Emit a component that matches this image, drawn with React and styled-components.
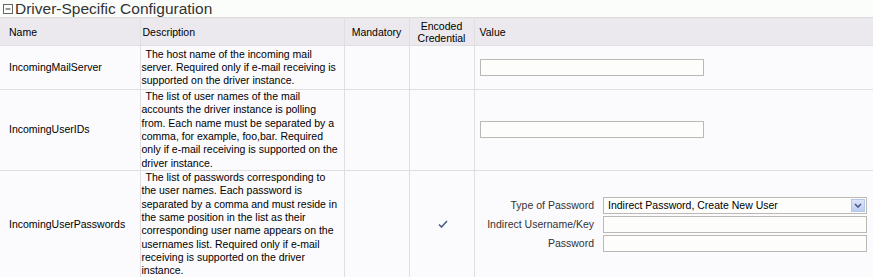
import React from "react";
import styled, { createGlobalStyle } from "styled-components";

const GlobalStyle = createGlobalStyle`
  body {
    margin: 0;
    background-color: #fbfdfb;
    font-family: "Liberation Sans", Arial, sans-serif;
  }
`;

const Section = styled.div`
  width: 873px;
`;

const SectionTitle = styled.h2`
  display: flex;
  align-items: center;
  gap: 2px;
  margin: 0;
  height: 17px;
  padding-left: 3px;
  font-size: 15.5px;
  line-height: 17px;
  font-weight: normal;
  color: #333;
`;

const ToggleIcon = styled.svg`
  width: 10px;
  height: 10px;
  flex-shrink: 0;
`;

const Grid = styled.table`
  width: 873px;
  border-collapse: collapse;
  table-layout: fixed;
  font-size: 10.5px;
  line-height: 13.33px;
  color: #000;
`;

const HeadCell = styled.th`
  height: 27px;
  padding: 0 ${(p) => (p.$pad ? p.$pad : "2px")};
  background-color: #ebe9ed;
  border: 1px solid #dfdee1;
  border-top-color: #dcdcdc;
  font-weight: normal;
  line-height: 12px;
  text-align: ${(p) => p.$align || "left"};
  vertical-align: middle;
  &:first-child { border-left: none; }
  &:last-child { border-right: none; }
`;

const Row = styled.tr`
  height: ${(p) => p.$height || "auto"};
  background-color: #fbfafd;
`;

const Cell = styled.td`
  padding: 0 ${(p) => p.$pad || "2px"};
  border: 1px solid #dfdee1;
  text-align: ${(p) => p.$align || "left"};
  vertical-align: middle;
  &:first-child { border-left: none; }
  &:last-child { border-right: none; }
`;

const DescCell = styled(Cell)`
  padding: 0 1px;
  text-indent: 4px;
`;

const TextInput = styled.div`
  box-sizing: border-box;
  width: ${(p) => p.$width || "264px"};
  height: 17px;
  border: 1px solid #bcb9b4;
  background-color: #fdfefc;
`;

const PasswordForm = styled.div`
  display: grid;
  grid-template-columns: auto 264px;
  column-gap: 9px;
  row-gap: 2px;
  justify-content: end;
  align-items: center;
`;

const FieldLabel = styled.span`
  color: #333;
  text-align: right;
  white-space: nowrap;
`;

const SelectBox = styled.div`
  box-sizing: border-box;
  display: flex;
  align-items: center;
  justify-content: space-between;
  height: 17px;
  padding: 0 1px 0 4px;
  border: 1px solid #bcb9b4;
  background-color: #fdfefc;
  color: #000;
`;

const ArrowButton = styled.span`
  box-sizing: border-box;
  display: flex;
  align-items: center;
  justify-content: center;
  width: 14px;
  height: 13px;
  border: 1px solid #b4c6ea;
  background: linear-gradient(#dbe5f9, #bccdf1);
`;

const Check = styled.svg`
  width: 10px;
  height: 8px;
  margin-left: 3px;
`;

const rows = [
  {
    name: "IncomingMailServer",
    height: "44px",
    desc: "The host name of the incoming mail server. Required only if e-mail receiving is supported on the driver instance.",
  },
  {
    name: "IncomingUserIDs",
    desc: "The list of user names of the mail accounts the driver instance is polling from. Each name must be separated by a comma, for example, foo,bar. Required only if e-mail receiving is supported on the driver instance.",
  },
];

export default function App() {
  return (
    <Section>
      <GlobalStyle />
      <SectionTitle>
        <ToggleIcon viewBox="0 0 10 10">
          <rect x="0.5" y="0.5" width="9" height="9" fill="#fff" stroke="#666" />
          <line x1="2.5" y1="5" x2="7.5" y2="5" stroke="#333" />
        </ToggleIcon>
        Driver-Specific Configuration
      </SectionTitle>
      <Grid>
        <colgroup>
          <col style={{ width: 140 }} />
          <col style={{ width: 204 }} />
          <col style={{ width: 65 }} />
          <col style={{ width: 65 }} />
          <col style={{ width: 399 }} />
        </colgroup>
        <thead>
          <tr>
            <HeadCell $pad="9px">Name</HeadCell>
            <HeadCell>Description</HeadCell>
            <HeadCell $align="center" $pad="3px">Mandatory</HeadCell>
            <HeadCell $align="center" $pad="3px">
              Encoded
              <br />
              Credential
            </HeadCell>
            <HeadCell $pad="5px">Value</HeadCell>
          </tr>
        </thead>
        <tbody>
          {rows.map((r) => (
            <Row key={r.name} $height={r.height}>
              <Cell $pad="9px">{r.name}</Cell>
              <DescCell>{r.desc}</DescCell>
              <Cell />
              <Cell />
              <Cell $pad="5px">
                <TextInput $width="224px" />
              </Cell>
            </Row>
          ))}
          <Row>
            <Cell $pad="9px">IncomingUserPasswords</Cell>
            <DescCell>
              The list of passwords corresponding to the user names. Each password is separated by a
              comma and must reside in the same position in the list as their corresponding user
              name appears on the usernames list. Required only if e-mail receiving is supported on
              the driver instance.
            </DescCell>
            <Cell />
            <Cell $align="center">
              <Check viewBox="0 0 10 8">
                <path d="M1 4.5 L3.5 7 L9 1" fill="none" stroke="#4c5d82" strokeWidth="1.6" />
              </Check>
            </Cell>
            <Cell $pad="6px">
              <PasswordForm>
                <FieldLabel>Type of Password</FieldLabel>
                <SelectBox>
                  Indirect Password, Create New User
                  <ArrowButton>
                    <svg width="8" height="5" viewBox="0 0 8 5">
                      <path d="M1 1 L4 4 L7 1" fill="none" stroke="#4a5a80" strokeWidth="1.6" />
                    </svg>
                  </ArrowButton>
                </SelectBox>
                <FieldLabel>Indirect Username/Key</FieldLabel>
                <TextInput />
                <FieldLabel>Password</FieldLabel>
                <TextInput />
              </PasswordForm>
            </Cell>
          </Row>
        </tbody>
      </Grid>
    </Section>
  );
}
